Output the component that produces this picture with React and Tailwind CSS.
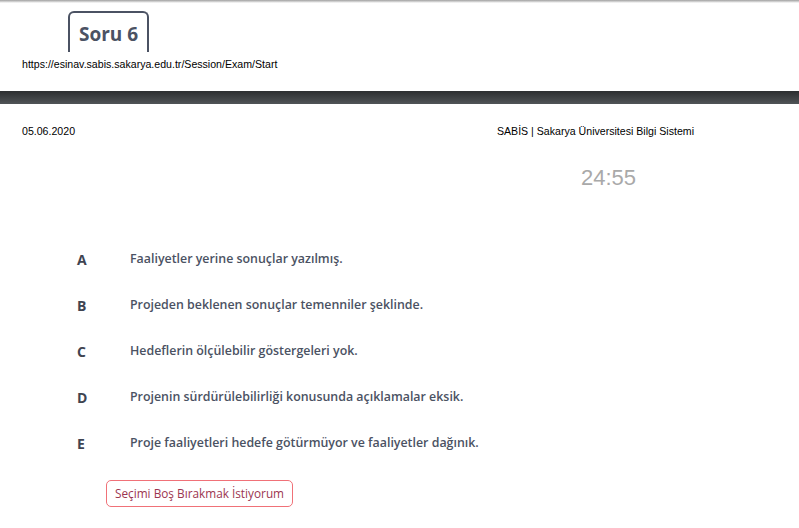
export default function App() {
  const opts = [
    ["A", "Faaliyetler yerine sonuçlar yazılmış."],
    ["B", "Projeden beklenen sonuçlar temenniler şeklinde."],
    ["C", "Hedeflerin ölçülebilir göstergeleri yok."],
    ["D", "Projenin sürdürülebilirliği konusunda açıklamalar eksik."],
    ["E", "Proje faaliyetleri hedefe götürmüyor ve faaliyetler dağınık."],
  ];
  return (
    <div className="w-[799px] h-[528px] bg-white overflow-hidden font-['Liberation_Sans',Arial,sans-serif]">
      <div className="h-[3px] bg-gradient-to-b from-[#a0a0a0] to-white" />
      <div className="pl-[68px] pt-[8px]">
        <div className="w-[81px] h-[41px] pt-[3px] border-2 border-b-0 border-[#4b5263] rounded-t-[6px] flex items-center justify-center text-[19px] font-bold text-[#4b5263] font-['Open_Sans',sans-serif]">
          Soru 6
        </div>
      </div>
      <div className="pl-[22px] mt-[5px] text-[10.6px] leading-[14px] text-black">
        https://esinav.sabis.sakarya.edu.tr/Session/Exam/Start
      </div>
      <div className="mt-[20px] h-[13px] bg-gradient-to-b from-[#2c2e30] to-[#505457]" />
      <div className="flex justify-between pl-[22px] pr-[105px] mt-[20px] text-[10.6px] leading-[14px] text-black">
        <span>05.06.2020</span>
        <span>SABİS | Sakarya Üniversitesi Bilgi Sistemi</span>
      </div>
      <div className="flex pl-[581px] mt-[27px] text-[22px] leading-[26px] text-[#a9a9a9]">24:55</div>
      <div className="mt-[58px] pl-[77px] flex flex-col gap-[26px] font-['Open_Sans',sans-serif]">
        {opts.map(([l, t]) => (
          <div key={l} className="flex items-center h-[20px]">
            <span className="w-[53px] text-[14px] font-bold text-[#3f4451]">{l}</span>
            <span className="text-[12.4px] font-semibold text-[#4b5263]">{t}</span>
          </div>
        ))}
      </div>
      <div className="pl-[106px] mt-[27px]">
        <button className="w-[187px] h-[27px] border border-[#f07178] rounded-[5px] text-[11.8px] text-[#9c3550] font-['Open_Sans',sans-serif]">
          Seçimi Boş Bırakmak İstiyorum
        </button>
      </div>
    </div>
  );
}
